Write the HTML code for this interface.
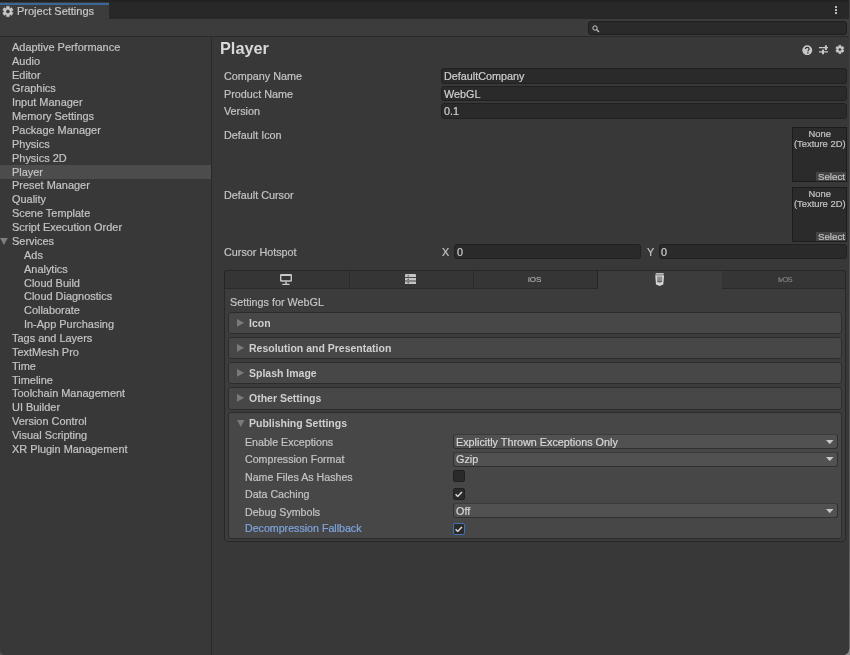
<!DOCTYPE html>
<html><head><meta charset="utf-8"><title>Project Settings</title>
<style>
html,body{margin:0;padding:0;width:850px;height:655px;overflow:hidden;background:#383838}
body{position:relative;font-family:"Liberation Sans",sans-serif}
.t{position:absolute;white-space:nowrap;will-change:transform;-webkit-text-stroke:0.2px currentColor}
.b{position:absolute}
</style></head><body>
<div class="b" style="left:0px;top:0px;width:850px;height:19px;background:#282828"></div>
<div class="b" style="left:0px;top:0px;width:850px;height:1.5px;background:#222222"></div>
<div class="b" style="left:0px;top:1.5px;width:108.7px;height:17.5px;background:#3c3c3c"></div>
<div class="b" style="left:0px;top:2.7px;width:108.7px;height:2.1px;background:#3a6798"></div>
<svg class="b" style="left:0;top:0" width="850" height="655"><path fill="#c8c8c8" fill-rule="evenodd" stroke="#c8c8c8" stroke-width="0.3" stroke-linejoin="round" d="M6.33 7.98L6.42 6.20L9.38 6.20L9.47 7.98L10.16 8.39L11.75 7.57L13.23 10.13L11.73 11.10L11.73 11.90L13.23 12.87L11.75 15.43L10.16 14.61L9.47 15.02L9.38 16.80L6.42 16.80L6.33 15.02L5.64 14.61L4.05 15.43L2.57 12.87L4.07 11.90L4.07 11.10L2.57 10.13L4.05 7.57L5.64 8.39ZM9.90 11.50A2.0 2.0 0 1 0 5.90 11.50A2.0 2.0 0 1 0 9.90 11.50Z"/></svg>
<div class="t" style="left:17px;top:5.19px;font-size:11px;line-height:13.2px;color:#c8c8c8;font-weight:normal;">Project Settings</div>
<div class="b" style="left:835px;top:5.5px;width:2.2px;height:2px;background:#c8c8c8;border-radius:0.5px"></div>
<div class="b" style="left:835px;top:8.9px;width:2.2px;height:2px;background:#c8c8c8;border-radius:0.5px"></div>
<div class="b" style="left:835px;top:12.2px;width:2.2px;height:2px;background:#c8c8c8;border-radius:0.5px"></div>
<div class="b" style="left:0px;top:19px;width:849px;height:17px;background:#3c3c3c"></div>
<div class="b" style="left:0px;top:35.8px;width:849px;height:1.4px;background:#2a2a2a"></div>
<div class="b" style="left:588px;top:20.8px;width:259px;height:13.8px;background:#2a2a2a;border:1px solid #1e1e1e;box-sizing:border-box;border-radius:3px"></div>
<svg class="b" style="left:591.5px;top:24.5px" width="8" height="8" viewBox="0 0 8 8"><circle cx="3" cy="3" r="2.2" fill="none" stroke="#c4c4c4" stroke-width="1.0"/><path d="M4.5 4.5L7 7" stroke="#c4c4c4" stroke-width="1.3"/></svg>
<div class="b" style="left:0px;top:37px;width:849px;height:618px;background:#383838"></div>
<div class="b" style="left:211px;top:37px;width:1px;height:618px;background:#2a2a2a"></div>
<div class="t" style="left:11.5px;top:40.84px;font-size:10.95px;line-height:13.14px;color:#c4c4c4;font-weight:normal;">Adaptive Performance</div>
<div class="t" style="left:11.5px;top:54.70px;font-size:10.95px;line-height:13.14px;color:#c4c4c4;font-weight:normal;">Audio</div>
<div class="t" style="left:11.5px;top:68.57px;font-size:10.95px;line-height:13.14px;color:#c4c4c4;font-weight:normal;">Editor</div>
<div class="t" style="left:11.5px;top:82.43px;font-size:10.95px;line-height:13.14px;color:#c4c4c4;font-weight:normal;">Graphics</div>
<div class="t" style="left:11.5px;top:96.30px;font-size:10.95px;line-height:13.14px;color:#c4c4c4;font-weight:normal;">Input Manager</div>
<div class="t" style="left:11.5px;top:110.16px;font-size:10.95px;line-height:13.14px;color:#c4c4c4;font-weight:normal;">Memory Settings</div>
<div class="t" style="left:11.5px;top:124.03px;font-size:10.95px;line-height:13.14px;color:#c4c4c4;font-weight:normal;">Package Manager</div>
<div class="t" style="left:11.5px;top:137.89px;font-size:10.95px;line-height:13.14px;color:#c4c4c4;font-weight:normal;">Physics</div>
<div class="t" style="left:11.5px;top:151.76px;font-size:10.95px;line-height:13.14px;color:#c4c4c4;font-weight:normal;">Physics 2D</div>
<div class="b" style="left:0px;top:165.38500000000002px;width:211px;height:14px;background:#4c4c4c"></div>
<div class="t" style="left:11.5px;top:165.62px;font-size:10.95px;line-height:13.14px;color:#c4c4c4;font-weight:normal;">Player</div>
<div class="t" style="left:11.5px;top:179.49px;font-size:10.95px;line-height:13.14px;color:#c4c4c4;font-weight:normal;">Preset Manager</div>
<div class="t" style="left:11.5px;top:193.35px;font-size:10.95px;line-height:13.14px;color:#c4c4c4;font-weight:normal;">Quality</div>
<div class="t" style="left:11.5px;top:207.22px;font-size:10.95px;line-height:13.14px;color:#c4c4c4;font-weight:normal;">Scene Template</div>
<div class="t" style="left:11.5px;top:221.08px;font-size:10.95px;line-height:13.14px;color:#c4c4c4;font-weight:normal;">Script Execution Order</div>
<div class="t" style="left:11.5px;top:234.95px;font-size:10.95px;line-height:13.14px;color:#c4c4c4;font-weight:normal;">Services</div>
<svg class="b" style="left:0.2px;top:237.91px" width="7.8" height="7" viewBox="0 0 7.8 7"><path d="M0 0H7.8L3.9 7Z" fill="#7e7e7e"/></svg>
<div class="t" style="left:23.6px;top:248.81px;font-size:10.95px;line-height:13.14px;color:#c4c4c4;font-weight:normal;">Ads</div>
<div class="t" style="left:23.6px;top:262.68px;font-size:10.95px;line-height:13.14px;color:#c4c4c4;font-weight:normal;">Analytics</div>
<div class="t" style="left:23.6px;top:276.54px;font-size:10.95px;line-height:13.14px;color:#c4c4c4;font-weight:normal;">Cloud Build</div>
<div class="t" style="left:23.6px;top:290.41px;font-size:10.95px;line-height:13.14px;color:#c4c4c4;font-weight:normal;">Cloud Diagnostics</div>
<div class="t" style="left:23.6px;top:304.27px;font-size:10.95px;line-height:13.14px;color:#c4c4c4;font-weight:normal;">Collaborate</div>
<div class="t" style="left:23.6px;top:318.14px;font-size:10.95px;line-height:13.14px;color:#c4c4c4;font-weight:normal;">In-App Purchasing</div>
<div class="t" style="left:11.5px;top:332.00px;font-size:10.95px;line-height:13.14px;color:#c4c4c4;font-weight:normal;">Tags and Layers</div>
<div class="t" style="left:11.5px;top:345.87px;font-size:10.95px;line-height:13.14px;color:#c4c4c4;font-weight:normal;">TextMesh Pro</div>
<div class="t" style="left:11.5px;top:359.73px;font-size:10.95px;line-height:13.14px;color:#c4c4c4;font-weight:normal;">Time</div>
<div class="t" style="left:11.5px;top:373.60px;font-size:10.95px;line-height:13.14px;color:#c4c4c4;font-weight:normal;">Timeline</div>
<div class="t" style="left:11.5px;top:387.46px;font-size:10.95px;line-height:13.14px;color:#c4c4c4;font-weight:normal;">Toolchain Management</div>
<div class="t" style="left:11.5px;top:401.33px;font-size:10.95px;line-height:13.14px;color:#c4c4c4;font-weight:normal;">UI Builder</div>
<div class="t" style="left:11.5px;top:415.19px;font-size:10.95px;line-height:13.14px;color:#c4c4c4;font-weight:normal;">Version Control</div>
<div class="t" style="left:11.5px;top:429.06px;font-size:10.95px;line-height:13.14px;color:#c4c4c4;font-weight:normal;">Visual Scripting</div>
<div class="t" style="left:11.5px;top:442.92px;font-size:10.95px;line-height:13.14px;color:#c4c4c4;font-weight:normal;">XR Plugin Management</div>
<div class="t" style="left:219.9px;top:39.27px;font-size:16.3px;line-height:19.56px;color:#d8d8d8;font-weight:bold;-webkit-text-stroke:0;">Player</div>
<svg class="b" style="left:802px;top:44.5px" width="10.5" height="10.5" viewBox="0 0 10.5 10.5"><circle cx="5.25" cy="5.25" r="4.9" fill="#c8c8c8"/><path d="M3.4 4.1C3.4 3 4.2 2.4 5.25 2.4S7.1 3 7.1 4C7.1 5.1 5.9 5.1 5.9 6.3" fill="none" stroke="#333" stroke-width="1.25"/><rect x="5.2" y="7.2" width="1.3" height="1.3" fill="#333"/></svg>
<svg class="b" style="left:818.8px;top:45px" width="9.5" height="9.5" viewBox="0 0 9.5 9.5"><path d="M0 2.6H9.5M0 6.8H9.5" stroke="#c8c8c8" stroke-width="1.3"/><rect x="5.9" y="0.3" width="2" height="4.6" rx="0.5" fill="#c8c8c8"/><rect x="3" y="4.6" width="2" height="4.6" rx="0.5" fill="#c8c8c8"/></svg>
<svg class="b" style="left:0;top:0" width="850" height="655"><path fill="#c8c8c8" fill-rule="evenodd" stroke="#c8c8c8" stroke-width="0.3" stroke-linejoin="round" d="M838.65 46.59L838.72 45.16L841.08 45.16L841.15 46.59L841.71 46.91L842.98 46.26L844.16 48.31L842.96 49.08L842.96 49.72L844.16 50.49L842.98 52.54L841.71 51.89L841.15 52.21L841.08 53.64L838.72 53.64L838.65 52.21L838.09 51.89L836.82 52.54L835.64 50.49L836.84 49.72L836.84 49.08L835.64 48.31L836.82 46.26L838.09 46.91ZM841.40 49.40A1.5 1.5 0 1 0 838.40 49.40A1.5 1.5 0 1 0 841.40 49.40Z"/></svg>
<div class="t" style="left:224px;top:70.28px;font-size:10.8px;line-height:12.96px;color:#c4c4c4;font-weight:normal;">Company Name</div>
<div class="b" style="left:441px;top:68px;width:405.7px;height:15.5px;background:#2a2a2a;border:1px solid #212121;box-sizing:border-box;border-radius:3px"></div>
<div class="t" style="left:443.5px;top:70.28px;font-size:10.8px;line-height:12.96px;color:#d0d0d0;font-weight:normal;">DefaultCompany</div>
<div class="t" style="left:224px;top:87.58px;font-size:10.8px;line-height:12.96px;color:#c4c4c4;font-weight:normal;">Product Name</div>
<div class="b" style="left:441px;top:85.5px;width:405.7px;height:15.5px;background:#2a2a2a;border:1px solid #212121;box-sizing:border-box;border-radius:3px"></div>
<div class="t" style="left:443.5px;top:87.58px;font-size:10.8px;line-height:12.96px;color:#d0d0d0;font-weight:normal;">WebGL</div>
<div class="t" style="left:224px;top:104.68px;font-size:10.8px;line-height:12.96px;color:#c4c4c4;font-weight:normal;">Version</div>
<div class="b" style="left:441px;top:103px;width:405.7px;height:15.5px;background:#2a2a2a;border:1px solid #212121;box-sizing:border-box;border-radius:3px"></div>
<div class="t" style="left:443.5px;top:104.68px;font-size:10.8px;line-height:12.96px;color:#d0d0d0;font-weight:normal;">0.1</div>
<div class="t" style="left:224px;top:129.28px;font-size:10.8px;line-height:12.96px;color:#c4c4c4;font-weight:normal;">Default Icon</div>
<div class="b" style="left:791.5px;top:127.3px;width:55.5px;height:55px;background:#2b2b2b;border:1px solid #1c1c1c;box-sizing:border-box"></div>
<div class="t" style="left:791.5px;top:128.9px;width:55.5px;text-align:center;font-size:9.4px;line-height:10.3px;color:#c4c4c4">None<br>(Texture 2D)</div>
<div class="b" style="left:815.8px;top:172.3px;width:30.5px;height:9.2px;background:#444444"></div>
<div class="t" style="left:818.2px;top:171.22px;font-size:9.7px;line-height:11.64px;color:#c0c0c0;font-weight:normal;">Select</div>
<div class="t" style="left:224px;top:188.98px;font-size:10.8px;line-height:12.96px;color:#c4c4c4;font-weight:normal;">Default Cursor</div>
<div class="b" style="left:791.5px;top:187px;width:55.5px;height:55px;background:#2b2b2b;border:1px solid #1c1c1c;box-sizing:border-box"></div>
<div class="t" style="left:791.5px;top:188.6px;width:55.5px;text-align:center;font-size:9.4px;line-height:10.3px;color:#c4c4c4">None<br>(Texture 2D)</div>
<div class="b" style="left:815.8px;top:232px;width:30.5px;height:9.2px;background:#444444"></div>
<div class="t" style="left:818.2px;top:230.92px;font-size:9.7px;line-height:11.64px;color:#c0c0c0;font-weight:normal;">Select</div>
<div class="t" style="left:224px;top:246.28px;font-size:10.8px;line-height:12.96px;color:#c4c4c4;font-weight:normal;">Cursor Hotspot</div>
<div class="t" style="left:441.5px;top:245.98px;font-size:10.8px;line-height:12.96px;color:#c4c4c4;font-weight:normal;">X</div>
<div class="b" style="left:453.8px;top:244px;width:187.7px;height:15px;background:#2a2a2a;border:1px solid #212121;box-sizing:border-box;border-radius:3px"></div>
<div class="t" style="left:456.5px;top:245.98px;font-size:10.8px;line-height:12.96px;color:#d0d0d0;font-weight:normal;">0</div>
<div class="t" style="left:646.5px;top:245.98px;font-size:10.8px;line-height:12.96px;color:#c4c4c4;font-weight:normal;">Y</div>
<div class="b" style="left:659px;top:244px;width:187.7px;height:15px;background:#2a2a2a;border:1px solid #212121;box-sizing:border-box;border-radius:3px"></div>
<div class="t" style="left:661.2px;top:245.98px;font-size:10.8px;line-height:12.96px;color:#d0d0d0;font-weight:normal;">0</div>
<div class="b" style="left:224.4px;top:270.3px;width:621.6px;height:272.2px;background:#3c3c3c;border:1px solid #282828;box-sizing:border-box;border-radius:4px"></div>
<div class="b" style="left:224.4px;top:270.3px;width:124.29999999999998px;height:18.5px;background:#353535;border-top:1px solid #282828;border-bottom:1px solid #2a2a2a;box-sizing:border-box;border-left:1px solid #242424;border-top-left-radius:3px"></div>
<div class="b" style="left:348.7px;top:270.3px;width:124.30000000000001px;height:18.5px;background:#353535;border-top:1px solid #282828;border-bottom:1px solid #2a2a2a;box-sizing:border-box;border-left:1px solid #2a2a2a"></div>
<div class="b" style="left:473.0px;top:270.3px;width:124.60000000000002px;height:18.5px;background:#353535;border-top:1px solid #282828;border-bottom:1px solid #2a2a2a;box-sizing:border-box;border-left:1px solid #2a2a2a;border-right:1px solid #242424"></div>
<div class="b" style="left:721.5px;top:270.3px;width:124.5px;height:18.5px;background:#353535;border-top:1px solid #282828;border-bottom:1px solid #2a2a2a;box-sizing:border-box;border-left:1px solid #2a2a2a;border-right:1px solid #242424;border-top-right-radius:3px;border-left:none"></div>
<svg class="b" style="left:280px;top:273.9px" width="12" height="11.2" viewBox="0 0 12 11.2"><path fill-rule="evenodd" fill="#c8c8c8" d="M1.3 0H10.7Q12 0 12 1.3V6.5Q12 7.8 10.7 7.8H1.3Q0 7.8 0 6.5V1.3Q0 0 1.3 0ZM1.4 1.9V6.2H10.6V1.9Z"/><rect x="5.3" y="7.6" width="1.5" height="2.4" fill="#c8c8c8"/><path d="M2.9 10.4H9" stroke="#c8c8c8" stroke-width="1.4" stroke-linecap="round"/></svg>
<svg class="b" style="left:405px;top:273.5px" width="11" height="10.5" viewBox="0 0 11 10.5"><rect x="0" y="0" width="11" height="10.5" rx="1" fill="#c4c4c4"/><path d="M0 3.5H11M0 7H11" stroke="#353535" stroke-width="0.9"/><path d="M2.5 1.75H4M2.5 5.25H4M2.5 8.75H4" stroke="#353535" stroke-width="0.9"/></svg>
<div class="t" style="left:528px;top:274.53px;font-size:8.1px;line-height:9.72px;color:#a8a8a8;font-weight:normal;">iOS</div>
<svg class="b" style="left:654.7px;top:272.8px" width="9.3" height="13" viewBox="0 0 9.3 13"><rect x="0.6" y="0" width="8.1" height="1.7" fill="#bcbcbc"/><path d="M0.2 2.3H9.1L8.3 11.6L4.65 12.9L1 11.6Z" fill="#d4d4d4"/><rect x="2.1" y="3.6" width="5.1" height="5.6" rx="0.9" fill="#8e8e8e"/><path d="M2.6 8.3Q4.65 9.6 6.7 8.3" fill="none" stroke="#4a4a4a" stroke-width="1"/></svg>
<div class="t" style="left:777.7px;top:274.81px;font-size:7.6px;line-height:9.12px;color:#7d7d7d;font-weight:normal;letter-spacing:-0.75px">tvOS</div>
<div class="t" style="left:229.7px;top:296.28px;font-size:10.8px;line-height:12.96px;color:#c4c4c4;font-weight:normal;">Settings for WebGL</div>
<div class="b" style="left:228.4px;top:311.6px;width:613.2px;height:22.6px;background:#474747;border:1px solid #2c2c2c;box-sizing:border-box;border-radius:3px"></div>
<svg class="b" style="left:237px;top:318.90px" width="7.3" height="7.8" viewBox="0 0 7.3 7.8"><path d="M0 0L7.3 3.9L0 7.8Z" fill="#7a7a7a"/></svg>
<div class="t" style="left:249px;top:316.86px;font-size:10.5px;line-height:12.6px;color:#d0d0d0;font-weight:bold;-webkit-text-stroke:0;">Icon</div>
<div class="b" style="left:228.4px;top:336.75px;width:613.2px;height:22.6px;background:#474747;border:1px solid #2c2c2c;box-sizing:border-box;border-radius:3px"></div>
<svg class="b" style="left:237px;top:344.05px" width="7.3" height="7.8" viewBox="0 0 7.3 7.8"><path d="M0 0L7.3 3.9L0 7.8Z" fill="#7a7a7a"/></svg>
<div class="t" style="left:249px;top:342.01px;font-size:10.5px;line-height:12.6px;color:#d0d0d0;font-weight:bold;-webkit-text-stroke:0;">Resolution and Presentation</div>
<div class="b" style="left:228.4px;top:361.90000000000003px;width:613.2px;height:22.6px;background:#474747;border:1px solid #2c2c2c;box-sizing:border-box;border-radius:3px"></div>
<svg class="b" style="left:237px;top:369.20px" width="7.3" height="7.8" viewBox="0 0 7.3 7.8"><path d="M0 0L7.3 3.9L0 7.8Z" fill="#7a7a7a"/></svg>
<div class="t" style="left:249px;top:367.16px;font-size:10.5px;line-height:12.6px;color:#d0d0d0;font-weight:bold;-webkit-text-stroke:0;">Splash Image</div>
<div class="b" style="left:228.4px;top:387.05px;width:613.2px;height:22.6px;background:#474747;border:1px solid #2c2c2c;box-sizing:border-box;border-radius:3px"></div>
<svg class="b" style="left:237px;top:394.35px" width="7.3" height="7.8" viewBox="0 0 7.3 7.8"><path d="M0 0L7.3 3.9L0 7.8Z" fill="#7a7a7a"/></svg>
<div class="t" style="left:249px;top:392.31px;font-size:10.5px;line-height:12.6px;color:#d0d0d0;font-weight:bold;-webkit-text-stroke:0;">Other Settings</div>
<div class="b" style="left:228.4px;top:411.9px;width:613.2px;height:127.1px;background:#474747;border:1px solid #2c2c2c;box-sizing:border-box;border-radius:3px"></div>
<svg class="b" style="left:236.7px;top:420.1px" width="7.5" height="7" viewBox="0 0 7.5 7"><path d="M0 0H7.5L3.75 7Z" fill="#7a7a7a"/></svg>
<div class="t" style="left:249px;top:417.26px;font-size:10.5px;line-height:12.6px;color:#d0d0d0;font-weight:bold;-webkit-text-stroke:0;">Publishing Settings</div>
<div class="t" style="left:245.2px;top:436.22px;font-size:10.65px;line-height:12.78px;color:#c4c4c4;font-weight:normal;">Enable Exceptions</div>
<div class="b" style="left:453.3px;top:434.2px;width:385px;height:15.2px;background:#515151;border:1px solid #303030;border-top-color:#3a3a3a;box-sizing:border-box;border-radius:3px"></div>
<div class="t" style="left:455.8px;top:435.78px;font-size:10.8px;line-height:12.96px;color:#d8d8d8;font-weight:normal;">Explicitly Thrown Exceptions Only</div>
<svg class="b" style="left:826px;top:439.50px" width="7.5" height="4.2" viewBox="0 0 7.5 4.2"><path d="M0 0H7.5L3.75 4.2Z" fill="#c8c8c8"/></svg>
<div class="t" style="left:245.2px;top:453.42px;font-size:10.65px;line-height:12.78px;color:#c4c4c4;font-weight:normal;">Compression Format</div>
<div class="b" style="left:453.3px;top:451.8px;width:385px;height:15.2px;background:#515151;border:1px solid #303030;border-top-color:#3a3a3a;box-sizing:border-box;border-radius:3px"></div>
<div class="t" style="left:455.8px;top:452.98px;font-size:10.8px;line-height:12.96px;color:#d8d8d8;font-weight:normal;">Gzip</div>
<svg class="b" style="left:826px;top:457.10px" width="7.5" height="4.2" viewBox="0 0 7.5 4.2"><path d="M0 0H7.5L3.75 4.2Z" fill="#c8c8c8"/></svg>
<div class="t" style="left:245.2px;top:471.12px;font-size:10.65px;line-height:12.78px;color:#c4c4c4;font-weight:normal;">Name Files As Hashes</div>
<div class="b" style="left:453px;top:470.4px;width:11.6px;height:11.8px;background:#2a2a2a;border:1px solid #202020;box-sizing:border-box;border-radius:2px"></div>
<div class="t" style="left:245.2px;top:488.22px;font-size:10.65px;line-height:12.78px;color:#c4c4c4;font-weight:normal;">Data Caching</div>
<div class="b" style="left:453px;top:487.9px;width:11.6px;height:11.8px;background:#2a2a2a;border:1px solid #202020;box-sizing:border-box;border-radius:2px"></div>
<svg class="b" style="left:455px;top:490.90px" width="7.5" height="6.5" viewBox="0 0 7.5 6.5"><path d="M0.6 3.3L2.7 5.4L6.9 1" fill="none" stroke="#e0e0e0" stroke-width="1.4"/></svg>
<div class="t" style="left:245.2px;top:505.52px;font-size:10.65px;line-height:12.78px;color:#c4c4c4;font-weight:normal;">Debug Symbols</div>
<div class="b" style="left:453.3px;top:503.2px;width:385px;height:15.2px;background:#515151;border:1px solid #303030;border-top-color:#3a3a3a;box-sizing:border-box;border-radius:3px"></div>
<div class="t" style="left:455.8px;top:505.08px;font-size:10.8px;line-height:12.96px;color:#d8d8d8;font-weight:normal;">Off</div>
<svg class="b" style="left:826px;top:508.50px" width="7.5" height="4.2" viewBox="0 0 7.5 4.2"><path d="M0 0H7.5L3.75 4.2Z" fill="#c8c8c8"/></svg>
<div class="t" style="left:245.2px;top:522.22px;font-size:10.65px;line-height:12.78px;color:#7ea5de;font-weight:normal;">Decompression Fallback</div>
<div class="b" style="left:453px;top:522.8px;width:11.6px;height:11.8px;background:#2a2a2a;border:1px solid #3f72b0;box-sizing:border-box;border-radius:2px"></div>
<svg class="b" style="left:455px;top:525.80px" width="7.5" height="6.5" viewBox="0 0 7.5 6.5"><path d="M0.6 3.3L2.7 5.4L6.9 1" fill="none" stroke="#e0e0e0" stroke-width="1.4"/></svg>
<div class="b" style="left:849px;top:0px;width:1px;height:655px;background:linear-gradient(#3c3c3c,#4e4e4e 30%,#5a5a5a 80%,#6c6c6c)"></div>
<div class="b" style="left:843px;top:649px;width:7px;height:6px;background:radial-gradient(circle at 0 0, transparent 5.6px, #8c8c8c 6.6px)"></div>
<div class="b" style="left:0px;top:651px;width:4px;height:4px;background:radial-gradient(circle at 100% 0, transparent 3.4px, #555 4.2px)"></div>
</body></html>
